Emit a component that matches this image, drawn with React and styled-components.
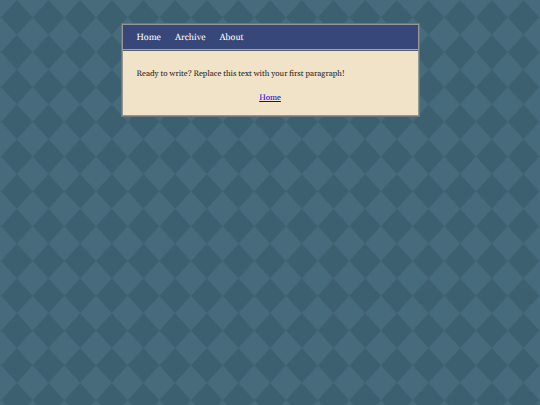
import React from 'react'
import styled, { createGlobalStyle } from 'styled-components'

const diamonds = encodeURIComponent(
  `<svg xmlns="http://www.w3.org/2000/svg" width="95" height="174" viewBox="0 0 6 10" preserveAspectRatio="none">
    <defs><pattern id="d" width="2" height="2" patternUnits="userSpaceOnUse"><path d="M1 0L2 1L1 2L0 1Z" fill="#3d6070"/></pattern></defs>
    <rect width="6" height="10" fill="#466b7c"/>
    <rect width="6" height="10" fill="url(#d)"/>
  </svg>`
)

const links = ['Home', 'Archive', 'About']

function App() {
  return (
    <>
      <GlobalStyle />
      <Container>
        <Header>
          {links.map((name) => (
            <NavLink href="#" key={name}>{name}</NavLink>
          ))}
        </Header>
        <Content>
          <Text>Ready to write? Replace this text with your first paragraph!</Text>
          <Footer>
            <a href="#">Home</a>
          </Footer>
        </Content>
      </Container>
    </>
  )
}

export default App

const GlobalStyle = createGlobalStyle`
    * {
        box-sizing: border-box;
    }
    body {
        margin: 0;
        padding: 24px 0;
        background: #466b7c url("data:image/svg+xml,${diamonds}") 1px 0 / 95px 174px;
        font-family: Georgia, Gelasio, "Liberation Serif", serif;
        font-size: 8px;
        line-height: 12px;
        text-rendering: geometricPrecision;
        color: #222;
    }
`
const Container = styled.main`
    width: 55%;
    min-width: 240px;
    margin: 0 auto;
    border: 1px solid #979690;
    box-shadow: 0 0 0 1px #6c777a;
    background: #f0e3c8;
`
const Header = styled.nav`
    display: flex;
    gap: 14px;
    padding: 6px 14px 2px;
    border-bottom: 1px solid #a3a3a3;
    background: #38477a;
`
const NavLink = styled.a`
    font-size: 9px;
    line-height: 16px;
    color: #fff;
    text-decoration: none;
`
const Content = styled.div`
    padding: 17px 14px 11px;
    border-top: 1px solid #5d5f68;
`
const Text = styled.p`
    margin: 0 0 12px;
`
const Footer = styled.footer`
    text-align: center;

    a {
        color: #0d00ee;
    }
`
